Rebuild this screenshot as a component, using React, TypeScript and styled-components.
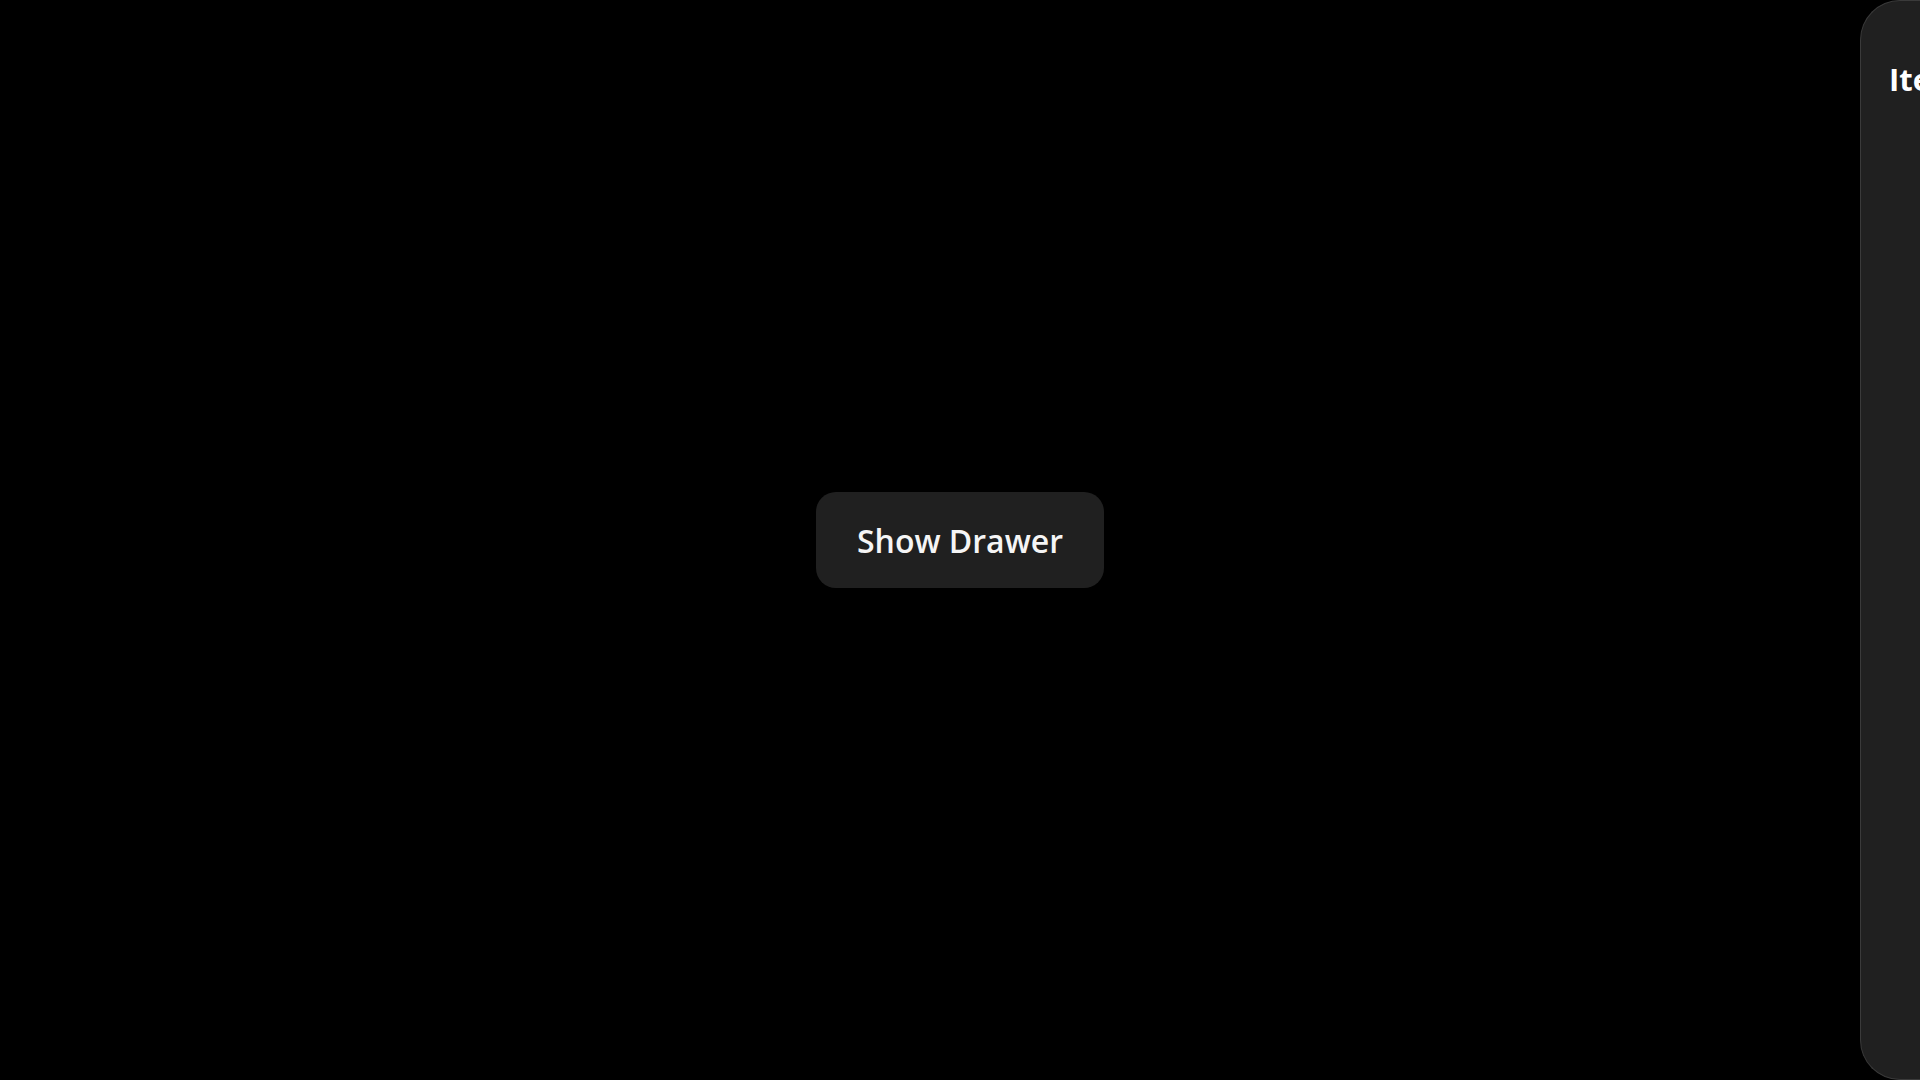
import styled, { createGlobalStyle } from "styled-components"

const GlobalStyle = createGlobalStyle`
  html, body {
    margin: 0;
    padding: 0;
    height: 100%;
    background: #000;
    overflow: hidden;
  }
  #root {
    height: 100%;
  }
  * {
    box-sizing: border-box;
  }
`

const Page = styled.div`
  width: 100vw;
  height: 100vh;
  display: flex;
  align-items: center;
  justify-content: center;
  background: #000;
  font-family: "Open Sans", "Noto Sans", sans-serif;
`

const ShowBtn = styled.button`
  width: 288px;
  height: 96px;
  border: none;
  border-radius: 20px;
  background: #202020;
  color: #f5f5f5;
  font-family: "Open Sans", "Noto Sans", sans-serif;
  font-size: 32px;
  font-weight: 600;
  cursor: pointer;
  padding: 0 40px;
`

const Drawer = styled.aside`
  position: fixed;
  top: 0;
  bottom: 0;
  left: 1860px;
  width: 420px;
  background: #202020;
  border: 1px solid #3a3a3a;
  border-right: none;
  border-radius: 40px 0 0 40px;
  padding: 58px 28px;
  font-family: "Open Sans", "Noto Sans", sans-serif;
`

const DrawerTitle = styled.h2`
  margin: 0;
  color: #fff;
  font-size: 31px;
  font-weight: 700;
  line-height: 1.35;
`

export default function App() {
  return (
    <>
      <GlobalStyle />
      <Page>
        <ShowBtn>Show Drawer</ShowBtn>
      </Page>
      <Drawer>
        <DrawerTitle>Items</DrawerTitle>
      </Drawer>
    </>
  )
}
